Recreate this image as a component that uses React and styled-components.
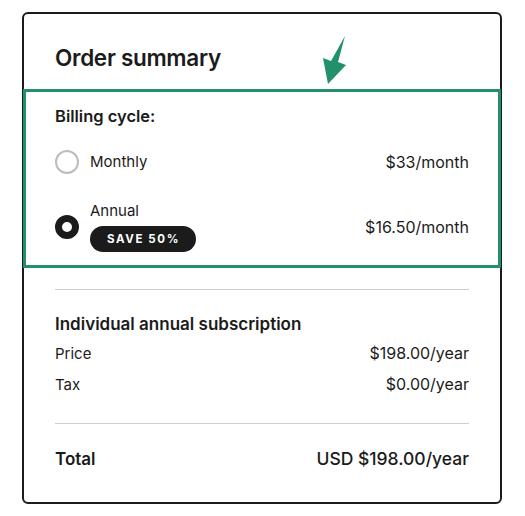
import styled, { createGlobalStyle } from "styled-components";

const GlobalStyle = createGlobalStyle`
  body {
    margin: 0;
    background: #fff;
    font-family: Inter, "Liberation Sans", sans-serif;
    color: #1b1b1b;
  }
`;

const Page = styled.div`
  padding: 12px 0 0 22px;
`;

const Card = styled.div`
  position: relative;
  width: 480px;
  height: 492px;
  box-sizing: border-box;
  border: 2px solid #1b1b1b;
  border-radius: 6px;
`;

const Header = styled.div`
  padding: 30px 31px 0;
  height: 75px;
  box-sizing: border-box;
`;

const Title = styled.h2`
  margin: 0;
  font-size: 22.5px;
  font-weight: 600;
  line-height: 28px;
  letter-spacing: -0.3px;
`;

// annotation arrow drawn over the card
const Arrow = styled.svg`
  position: absolute;
  left: 294px;
  top: 8px;
`;

const BillingBox = styled.div`
  border: 3px solid #21906b;
  margin: 0 -1px;
  padding: 12px 29px 13px;
`;

const Label = styled.div`
  font-size: 16.5px;
  font-weight: 600;
  line-height: 24px;
`;

const OptionRow = styled.div`
  display: flex;
  align-items: center;
  justify-content: space-between;
  margin-top: ${(p) => p.$top}px;
`;

const OptionLeft = styled.div`
  display: flex;
  align-items: center;
  gap: 11px;
`;

const Radio = styled.span`
  width: 24px;
  height: 24px;
  box-sizing: border-box;
  border-radius: 50%;
  border: ${(p) => (p.$checked ? "7px solid #1b1b1b" : "2px solid #bcbcbc")};
  background: #fff;
`;

const OptionName = styled.div`
  font-size: 15px;
  line-height: 20px;
`;

const Badge = styled.div`
  margin-top: 5px;
  display: inline-block;
  background: #1b1b1b;
  color: #fff;
  font-size: 11.5px;
  font-weight: 700;
  letter-spacing: 1.6px;
  line-height: 26px;
  padding: 0 16px 0 17px;
  border-radius: 13px;
`;

const Amount = styled.div`
  font-size: 16px;
  line-height: 20px;
`;

const Section = styled.div`
  margin: ${(p) => p.$gap}px 31px 0;
  border-top: 1px solid #cfcfcf;
  padding-top: ${(p) => p.$top}px;
`;

const Sub = styled.div`
  font-size: 17px;
  font-weight: 600;
  line-height: 24px;
  margin-bottom: 2px;
`;

const Line = styled.div`
  display: flex;
  justify-content: space-between;
  align-items: baseline;
  font-size: 15px;
  line-height: 30px;
`;

const Value = styled.span`
  font-size: 16px;
`;

const TotalLine = styled.div`
  display: flex;
  justify-content: space-between;
  align-items: baseline;
  font-size: 17px;
  line-height: 24px;
  font-weight: 600;
`;

const TotalValue = styled.span`
  font-size: 17.5px;
  font-weight: 500;
`;

export default function App() {
  return (
    <Page>
      <GlobalStyle />
      <Card>
        <Header>
          <Title>Order summary</Title>
        </Header>
        <Arrow width="32" height="64" viewBox="0 0 32 64">
          <polygon
            points="27,14 20,40 28,43 10,62 5,36 13,39"
            fill="#21906b"
          />
        </Arrow>
        <BillingBox>
          <Label>Billing cycle:</Label>
          <OptionRow $top={22}>
            <OptionLeft>
              <Radio />
              <OptionName>Monthly</OptionName>
            </OptionLeft>
            <Amount>$33/month</Amount>
          </OptionRow>
          <OptionRow $top={27}>
            <OptionLeft>
              <Radio $checked />
              <div>
                <OptionName>Annual</OptionName>
                <Badge>SAVE 50%</Badge>
              </div>
            </OptionLeft>
            <Amount>$16.50/month</Amount>
          </OptionRow>
        </BillingBox>
        <Section $gap={21} $top={22}>
          <Sub>Individual annual subscription</Sub>
          <Line>
            <span>Price</span>
            <Value>$198.00/year</Value>
          </Line>
          <Line>
            <span>Tax</span>
            <Value>$0.00/year</Value>
          </Line>
        </Section>
        <Section $gap={23} $top={23}>
          <TotalLine>
            <span>Total</span>
            <TotalValue>USD $198.00/year</TotalValue>
          </TotalLine>
        </Section>
      </Card>
    </Page>
  );
}
